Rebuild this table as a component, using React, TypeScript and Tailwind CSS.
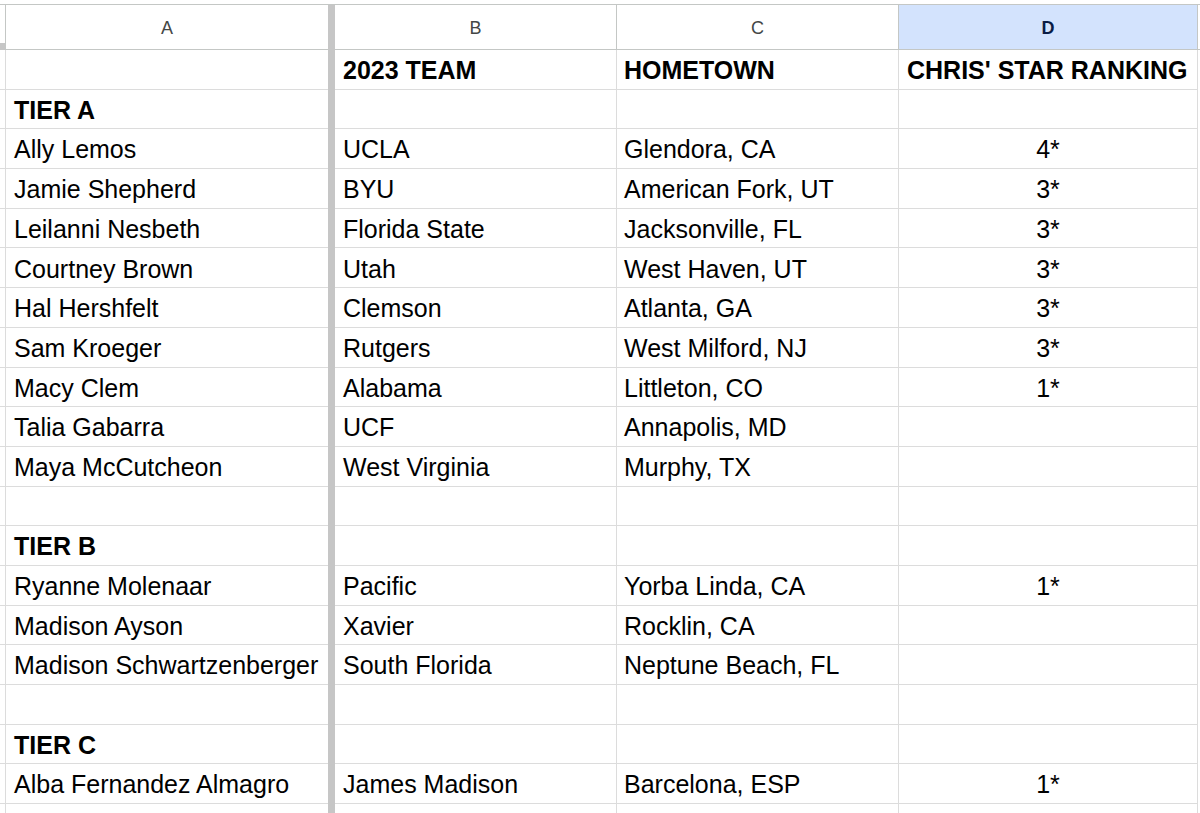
import React from 'react';

type Row = { cells: [string, string, string, string]; bold?: boolean };

const rows: Row[] = [
  { cells: ['', '2023 TEAM', 'HOMETOWN', "CHRIS' STAR RANKING"], bold: true },
  { cells: ['TIER A', '', '', ''], bold: true },
  { cells: ['Ally Lemos', 'UCLA', 'Glendora, CA', '4*'] },
  { cells: ['Jamie Shepherd', 'BYU', 'American Fork, UT', '3*'] },
  { cells: ['Leilanni Nesbeth', 'Florida State', 'Jacksonville, FL', '3*'] },
  { cells: ['Courtney Brown', 'Utah', 'West Haven, UT', '3*'] },
  { cells: ['Hal Hershfelt', 'Clemson', 'Atlanta, GA', '3*'] },
  { cells: ['Sam Kroeger', 'Rutgers', 'West Milford, NJ', '3*'] },
  { cells: ['Macy Clem', 'Alabama', 'Littleton, CO', '1*'] },
  { cells: ['Talia Gabarra', 'UCF', 'Annapolis, MD', ''] },
  { cells: ['Maya McCutcheon', 'West Virginia', 'Murphy, TX', ''] },
  { cells: ['', '', '', ''] },
  { cells: ['TIER B', '', '', ''], bold: true },
  { cells: ['Ryanne Molenaar', 'Pacific', 'Yorba Linda, CA', '1*'] },
  { cells: ['Madison Ayson', 'Xavier', 'Rocklin, CA', ''] },
  { cells: ['Madison Schwartzenberger', 'South Florida', 'Neptune Beach, FL', ''] },
  { cells: ['', '', '', ''] },
  { cells: ['TIER C', '', '', ''], bold: true },
  { cells: ['Alba Fernandez Almagro', 'James Madison', 'Barcelona, ESP', '1*'] },
];

const DataRow: React.FC<{ row: Row }> = ({ row }) => {
  const weight = row.bold ? 'font-bold' : 'font-normal';
  // star column is centered unless it is the header label
  const dAlign = row.bold ? 'justify-start pl-2' : 'justify-center';
  return (
    <div className={`flex h-[39.7px] ${weight}`}>
      <div className="w-[6px] shrink-0 border-b border-r border-[#dcdcdc]" />
      <div className="w-[322px] shrink-0 border-b border-[#dcdcdc] flex items-center pl-2 pt-[3px] whitespace-nowrap overflow-hidden">
        {row.cells[0]}
      </div>
      <div className="w-[7px] shrink-0 bg-[#c6c6c6]" />
      <div className="w-[282px] shrink-0 border-b border-r border-[#dcdcdc] flex items-center pl-2 pt-[3px] whitespace-nowrap">
        {row.cells[1]}
      </div>
      <div className="w-[282px] shrink-0 border-b border-r border-[#dcdcdc] flex items-center pl-[7px] pt-[3px] whitespace-nowrap">
        {row.cells[2]}
      </div>
      <div className={`w-[299px] shrink-0 border-b border-r border-[#dcdcdc] flex items-center pt-[3px] whitespace-nowrap ${dAlign}`}>
        {row.cells[3]}
      </div>
      <div className="flex-1" />
    </div>
  );
};

export default function App() {
  return (
    <div className="w-[1200px] h-[813px] overflow-hidden bg-white text-black text-[25px] font-['Liberation_Sans',Arial,sans-serif]">
      <div className="h-[4px]" />
      {/* column letters */}
      <div className="flex h-[46px] border-t border-[#c4c7c5] text-[18px] text-[#444746]">
        <div className="w-[6px] shrink-0 border-r border-[#c4c7c5] flex flex-col justify-end">
          <div className="h-[7px] bg-[#c6c6c6]" />
        </div>
        <div className="w-[322px] shrink-0 border-b border-[#c4c7c5] flex items-center justify-center pt-[2px]">A</div>
        <div className="w-[7px] shrink-0 bg-[#c6c6c6]" />
        <div className="w-[282px] shrink-0 border-b border-r border-[#c4c7c5] flex items-center justify-center pt-[2px]">B</div>
        <div className="w-[282px] shrink-0 border-b border-r border-[#c4c7c5] flex items-center justify-center pt-[2px]">C</div>
        <div className="w-[299px] shrink-0 border-b border-r border-[#c4c7c5] bg-[#d3e3fd] flex items-center justify-center pt-[2px] font-bold text-[#0a1c45]">
          D
        </div>
        <div className="flex-1 border-b border-[#c4c7c5]" />
      </div>
      {rows.map((row, i) => (
        <DataRow key={i} row={row} />
      ))}
      <DataRow row={{ cells: ['', '', '', ''] }} />
    </div>
  );
}
